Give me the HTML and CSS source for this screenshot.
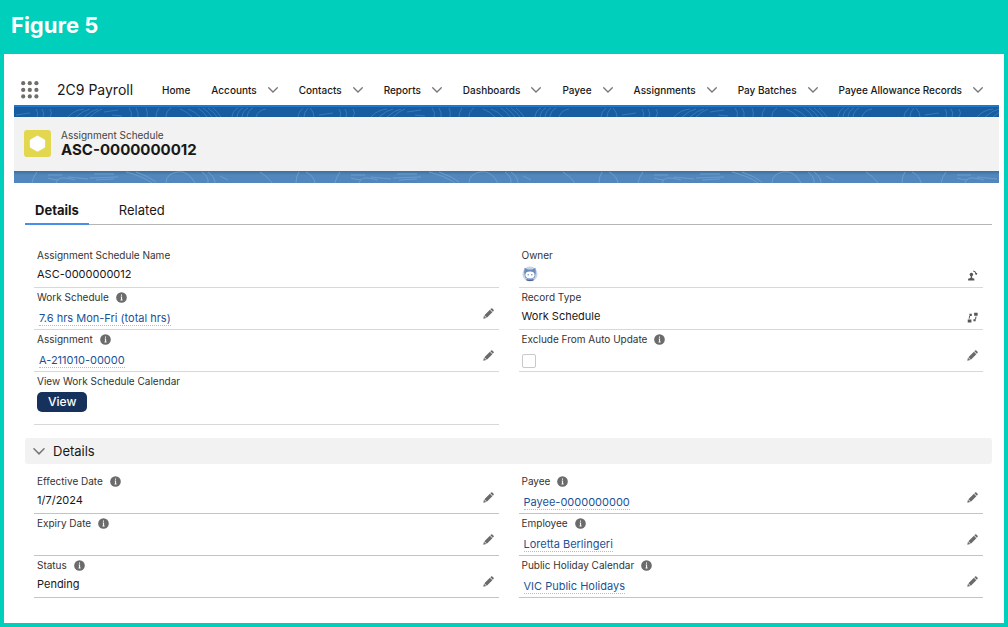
FILE: index.html
```
<!DOCTYPE html>
<html lang="en">
<head>
  <meta charset="UTF-8">
  <meta name="viewport" content="width=device-width, initial-scale=1">
  <title>2C9 Payroll - Assignment Schedule</title>
  <link rel="stylesheet" href="styles.css">
</head>
<body>

  <!-- shared icons -->
  <svg class="icon-defs" aria-hidden="true">
    <symbol id="chevron" viewBox="0 0 10 6">
      <path d="M0.7 0.7 L5 5 L9.3 0.7" fill="none" stroke="#777" stroke-width="1.3" stroke-linecap="round"/>
    </symbol>
    <symbol id="info" viewBox="0 0 12 12">
      <circle cx="6" cy="6" r="5.8" fill="#6b6b6b"/>
      <path d="M6 2.8v1.3M5.2 5.4h0.9v3M4.9 8.7h2.3" fill="none" stroke="#fff" stroke-width="1.1"/>
    </symbol>
    <symbol id="pencil" viewBox="0 0 12 12">
      <path d="M0.3 11.7l0.7-3.3 2.6 2.6zM1.5 7.8l6-6 2.7 2.7-6 6zM8 1.3l0.8-0.8q0.7-0.6 1.4 0l1.3 1.3q0.6 0.7 0 1.4l-0.8 0.8z" fill="#6a6a6a"/>
    </symbol>
    <symbol id="change-owner" viewBox="0 0 12 12">
      <circle cx="4.8" cy="5" r="1.9" fill="#555"/>
      <path d="M4.1 6h1.4l0.2 2.6 2.3 0.9v1.9H1.2V9.5l2.7-0.9z" fill="#555"/>
      <path d="M6.8 1.2q2.6 0.4 3.2 3.2M8.9 3.9l1.2 0.8 0.8-1.3" fill="none" stroke="#555" stroke-width="1.1"/>
    </symbol>
    <symbol id="change-type" viewBox="0 0 12 12">
      <path d="M0.8 8.2h4v3.3h-4zM7.8 0.7h3.8V4H7.8z" fill="#555"/>
      <path d="M2.4 7.2Q2 4.6 4.2 2.8M2.6 2.6h2v1.8M9.8 5Q10 7.6 7.8 9.2M9.6 9.6h-2V7.8" fill="none" stroke="#555" stroke-width="1.2"/>
    </symbol>
  </svg>

  <h1 class="figure-title">Figure 5</h1>

  <div class="app">
    <nav class="navbar">
      <button class="launcher" aria-label="App Launcher">
        <svg width="18" height="18" viewBox="0 0 18 18" fill="#706e6b">
          <circle cx="2.2" cy="2.2" r="2.1"/><circle cx="8.8" cy="2.2" r="2.1"/><circle cx="15.4" cy="2.2" r="2.1"/>
          <circle cx="2.2" cy="8.9" r="2.1"/><circle cx="8.8" cy="8.9" r="2.1"/><circle cx="15.4" cy="8.9" r="2.1"/>
          <circle cx="2.2" cy="15.4" r="2.1"/><circle cx="8.8" cy="15.4" r="2.1"/><circle cx="15.4" cy="15.4" r="2.1"/>
        </svg>
      </button>
      <span class="app-name">2C9 Payroll</span>
      <ul class="nav-items">
        <li><a href="#">Home</a></li>
        <li><a href="#">Accounts</a><svg class="chevron"><use href="#chevron"/></svg></li>
        <li><a href="#">Contacts</a><svg class="chevron"><use href="#chevron"/></svg></li>
        <li><a href="#">Reports</a><svg class="chevron"><use href="#chevron"/></svg></li>
        <li><a href="#">Dashboards</a><svg class="chevron"><use href="#chevron"/></svg></li>
        <li><a href="#">Payee</a><svg class="chevron"><use href="#chevron"/></svg></li>
        <li><a href="#">Assignments</a><svg class="chevron"><use href="#chevron"/></svg></li>
        <li><a href="#">Pay Batches</a><svg class="chevron"><use href="#chevron"/></svg></li>
        <li><a href="#">Payee Allowance Records</a><svg class="chevron"><use href="#chevron"/></svg></li>
      </ul>
    </nav>

    <header class="banner">
      <svg class="strip strip-top" aria-hidden="true">
        <defs>
          <pattern id="waves-top" width="303" height="12" patternUnits="userSpaceOnUse">
            <g fill="none" stroke="#3f7fbb" stroke-width="0.8">
              <path d="M2 8l14-2M22 2q3 4 1 8M28 2q3 4 1 8M36 2q3 4 0 8"/>
              <path d="M54 10q6-7 16-8M62 10q8-7 14-8M70 10q8-7 14-8M76 10q6-6 12-8M90 5l14-2M98 8l10 1"/>
              <path d="M115 1q4 5 2 9M122 1q3 5 2 9M132 1q2 4 1 9M142 10q0-5 3-9M152 10q0-6 5-9"/>
              <path d="M166 2q8 3 12 8M174 2q8 3 12 8M184 1q6 4 9 9M189 1q6 4 9 9M194 1q6 4 9 9M199 1q5 4 8 9"/>
              <path d="M218 10q1-7 6-9M223 10q1-7 6-9M228 10q1-7 6-9M233 10q1-7 6-9M242 10q2-7 10-8"/>
              <path d="M284 10q0-5 5-9M290 10q0-5 4-9M296 1q4 4 4 9"/>
            </g>
          </pattern>
        </defs>
        <rect width="100%" height="100%" fill="url(#waves-top)"/>
      </svg>
      <div class="record">
        <svg class="record-icon" viewBox="0 0 26 26" aria-hidden="true">
          <rect width="26" height="26" rx="3" fill="#e2d74e"/>
          <path d="M13 5.4l6.4 3.4q1 0.6 1 1.4v5.8q0 0.8-1 1.4L13 21l-6.4-3.6q-1-0.6-1-1.4v-5.8q0-0.8 1-1.4z" fill="#fff"/>
        </svg>
        <div>
          <p class="record-type">Assignment Schedule</p>
          <h2 class="record-name">ASC-0000000012</h2>
        </div>
      </div>
      <svg class="strip strip-bottom" aria-hidden="true">
        <defs>
          <pattern id="waves-bottom" width="303" height="12" patternUnits="userSpaceOnUse">
            <g fill="none" stroke="#73a0cc" stroke-width="0.8">
              <path d="M18 12q1-6 5-11M34 4h14M34 7q6 2 10 2M42 12q2-6 9-5t10 2M54 6l20 2"/>
              <path d="M76 7l28-1M80 3h20M82 9l18-1"/>
              <path d="M112 1q16 4 26 11M122 1q12 4 20 10M152 12q0-9 11-11t18 11M188 1q7 5 6 11M194 1q7 5 7 11M206 5l8 4"/>
              <path d="M246 1q8 5 12 11M282 12q0-7 3-11M292 1q8 4 9 11" />
            </g>
          </pattern>
        </defs>
        <rect width="100%" height="100%" fill="url(#waves-bottom)"/>
      </svg>
    </header>

    <div class="tabs" role="tablist">
      <button class="tab active" role="tab" aria-selected="true">Details</button>
      <button class="tab" role="tab" aria-selected="false">Related</button>
    </div>

    <main class="content">
      <div class="fields">
        <div class="column">
          <div class="field">
            <p class="label">Assignment Schedule Name</p>
            <p class="value">ASC-0000000012</p>
          </div>
          <div class="field">
            <p class="label">Work Schedule <svg class="info"><use href="#info"/></svg></p>
            <p class="value linked"><a href="#">7.6 hrs Mon-Fri (total hrs)</a></p>
            <button class="edit" aria-label="Edit Work Schedule"><svg><use href="#pencil"/></svg></button>
          </div>
          <div class="field">
            <p class="label">Assignment <svg class="info"><use href="#info"/></svg></p>
            <p class="value linked"><a href="#">A-211010-00000</a></p>
            <button class="edit" aria-label="Edit Assignment"><svg><use href="#pencil"/></svg></button>
          </div>
          <div class="field tall">
            <p class="label">View Work Schedule Calendar</p>
            <button class="view-btn">View</button>
          </div>
        </div>
        <div class="column">
          <div class="field">
            <p class="label">Owner</p>
            <p class="value">
              <svg class="avatar" viewBox="0 0 16 16" role="img" aria-label="Owner avatar">
                <circle cx="8" cy="8" r="7.5" fill="#c5d3e8"/>
                <path d="M2.6 1.8l3.2 1.6h4.4l3.2-1.6 0.4 4.6-1 5.2-4.8 2.4-4.8-2.4-1-5.2z" fill="#6d8bb8"/>
                <ellipse cx="8" cy="9" rx="4.6" ry="3.4" fill="#fff"/>
                <circle cx="6.2" cy="8.8" r="0.7" fill="#5f7fae"/><circle cx="9.8" cy="8.8" r="0.7" fill="#5f7fae"/>
                <path d="M4.4 13.6q3.6 1.6 7.2 0" fill="none" stroke="#4a6796" stroke-width="1.2"/>
              </svg>
            </p>
            <button class="edit change" aria-label="Change Owner"><svg><use href="#change-owner"/></svg></button>
          </div>
          <div class="field">
            <p class="label">Record Type</p>
            <p class="value">Work Schedule</p>
            <button class="edit change" aria-label="Change Record Type"><svg><use href="#change-type"/></svg></button>
          </div>
          <div class="field">
            <p class="label"><label for="exclude">Exclude From Auto Update</label> <svg class="info"><use href="#info"/></svg></p>
            <input type="checkbox" id="exclude" class="checkbox">
            <button class="edit" aria-label="Edit Exclude From Auto Update"><svg><use href="#pencil"/></svg></button>
          </div>
        </div>
      </div>

      <button class="section-title" aria-expanded="true"><svg class="chevron"><use href="#chevron"/></svg>Details</button>

      <div class="fields section">
        <div class="column">
          <div class="field">
            <p class="label">Effective Date <svg class="info"><use href="#info"/></svg></p>
            <p class="value">1/7/2024</p>
            <button class="edit" aria-label="Edit Effective Date"><svg><use href="#pencil"/></svg></button>
          </div>
          <div class="field">
            <p class="label">Expiry Date <svg class="info"><use href="#info"/></svg></p>
            <p class="value"></p>
            <button class="edit" aria-label="Edit Expiry Date"><svg><use href="#pencil"/></svg></button>
          </div>
          <div class="field">
            <p class="label">Status <svg class="info"><use href="#info"/></svg></p>
            <p class="value">Pending</p>
            <button class="edit" aria-label="Edit Status"><svg><use href="#pencil"/></svg></button>
          </div>
        </div>
        <div class="column">
          <div class="field">
            <p class="label">Payee <svg class="info"><use href="#info"/></svg></p>
            <p class="value linked"><a href="#">Payee-0000000000</a></p>
            <button class="edit" aria-label="Edit Payee"><svg><use href="#pencil"/></svg></button>
          </div>
          <div class="field">
            <p class="label">Employee <svg class="info"><use href="#info"/></svg></p>
            <p class="value linked"><a href="#">Loretta Berlingeri</a></p>
            <button class="edit" aria-label="Edit Employee"><svg><use href="#pencil"/></svg></button>
          </div>
          <div class="field">
            <p class="label">Public Holiday Calendar <svg class="info"><use href="#info"/></svg></p>
            <p class="value linked"><a href="#">VIC Public Holidays</a></p>
            <button class="edit" aria-label="Edit Public Holiday Calendar"><svg><use href="#pencil"/></svg></button>
          </div>
        </div>
      </div>
    </main>
  </div>

</body>
</html>
```
FILE: styles.css
```
* {
  box-sizing: border-box;
}

body {
  background-color: #00cfbb;
  font-family: Inter, "Liberation Sans", sans-serif;
  color: #181818;
  margin: 0;
  padding: 0 4px 4px;
}

p, h1, h2, ul {
  margin: 0;
  padding: 0;
}

button {
  font-family: inherit;
  color: inherit;
  background: none;
  border: none;
  padding: 0;
  cursor: pointer;
}

.icon-defs {
  display: none;
}

.figure-title {
  color: white;
  font-size: 22px;
  line-height: 26px;
  padding: 12px 7px 16px;
}

.app {
  background-color: white;
  padding: 20px 5px 25px 10px;
}

/* navigation */
.navbar {
  display: flex;
  align-items: center;
  height: 31px;
  padding-left: 7px;
}

.launcher {
  display: flex;
}

.app-name {
  font-size: 14px;
  margin-left: 18px;
  white-space: nowrap;
}

.nav-items {
  display: flex;
  gap: 21px;
  list-style: none;
  margin-left: 29px;
  font-size: 10px;
  font-weight: 500;
  white-space: nowrap;
}

.nav-items li {
  display: flex;
  align-items: center;
  gap: 11px;
}

.nav-items a {
  color: inherit;
  text-decoration: none;
}

.chevron {
  width: 10px;
  height: 6px;
}

/* record banner */
.strip {
  display: block;
  width: 100%;
  height: 12px;
}

.strip-top {
  background-color: #175d9f;
  border-top: 2px solid #1b79cf;
}

.strip-bottom {
  background: linear-gradient(#3c709f, #5287bd 4px);
}

.record {
  display: flex;
  align-items: center;
  gap: 10px;
  height: 54px;
  padding: 0 10px 2px;
  background-color: #f2f2f2;
}

.record-icon {
  width: 27px;
  height: 27px;
}

.record-type {
  font-size: 10px;
  line-height: 13px;
  color: #444;
}

.record-name {
  font-size: 15px;
  line-height: 16px;
}

/* tabs */
.tabs {
  display: flex;
  margin: 13px 7px 0 11px;
  border-bottom: 1px solid #b5b5b5;
}

.tab {
  font-size: 13px;
  line-height: 16px;
  padding: 6px 10px 5px;
  margin: 0 20px -1px 0;
  border-bottom: 2px solid transparent;
}

.tab.active {
  font-weight: bold;
  border-bottom-color: #4a8fe7;
}

/* fields */
.content {
  padding: 21px 7px 0 11px;
}

.fields {
  display: grid;
  grid-template-columns: 1fr 1fr;
  gap: 20px;
  padding: 0 9px;
}

.fields.section {
  padding-top: 8px;
}

.field {
  position: relative;
  height: 42px;
  padding: 2px 3px 0;
  border-bottom: 1px solid #d8d8d8;
}

.section .field {
  border-bottom-color: #c4c4c4;
}

.field.tall {
  height: 53px;
}

.label {
  display: flex;
  align-items: center;
  gap: 7px;
  font-size: 10px;
  line-height: 14px;
  color: #333;
}

.info {
  width: 11px;
  height: 11px;
}

.value {
  font-size: 11px;
  line-height: 16px;
  padding-top: 4px;
}

.value.linked {
  padding: 6px 2px 0;
}

.value a {
  color: #1b5297;
  text-decoration: none;
  border-bottom: 1px dotted #a9bfdc;
}

.avatar {
  display: block;
  width: 16px;
  height: 16px;
}

.edit {
  position: absolute;
  right: 5px;
  bottom: 10px;
}

.edit.change {
  bottom: 6px;
}

.edit svg {
  display: block;
  width: 11px;
  height: 11px;
}

.checkbox {
  appearance: none;
  display: block;
  width: 14px;
  height: 14px;
  margin: 8px 0 0;
  border: 1px solid #c9c9c9;
  border-radius: 2px;
  background-color: white;
}

.view-btn {
  display: block;
  margin-top: 4px;
  padding: 0 11px;
  font-size: 12px;
  line-height: 20px;
  font-weight: 500;
  color: white;
  background-color: #16325c;
  border-radius: 5px;
}

.section-title {
  display: flex;
  align-items: center;
  gap: 8px;
  width: 100%;
  margin-top: 13px;
  padding: 5px 8px;
  font-size: 13px;
  line-height: 16px;
  background-color: #f2f2f2;
  border-radius: 3px;
}

.section-title .chevron {
  width: 12px;
  height: 7px;
}
```
